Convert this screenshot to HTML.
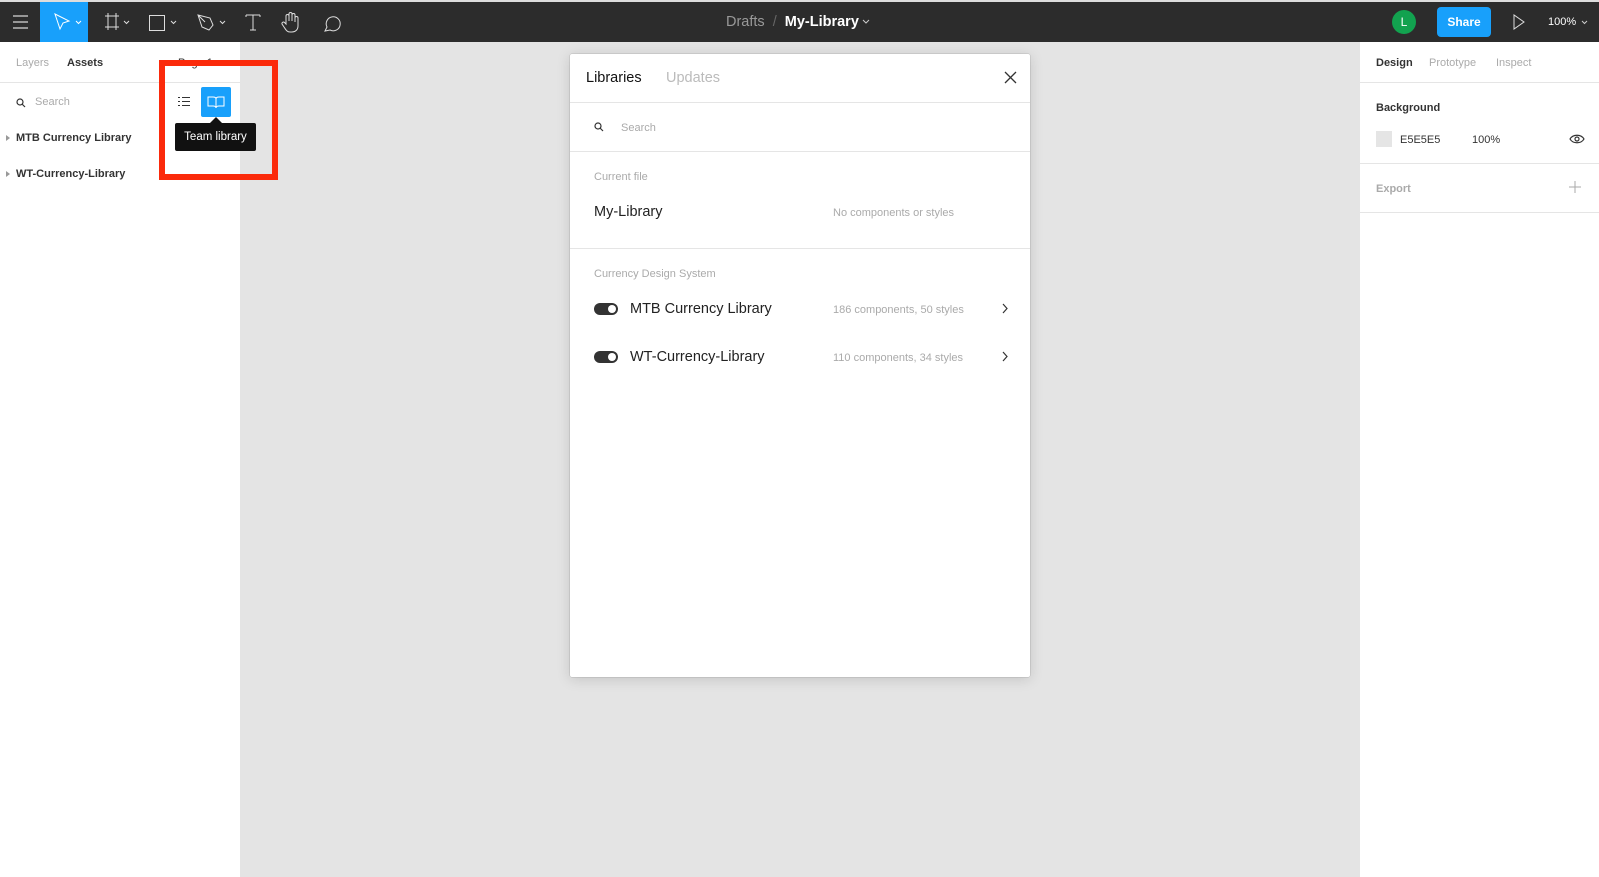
<!DOCTYPE html>
<html><head><meta charset="utf-8">
<style>
*{margin:0;padding:0;box-sizing:border-box}
body{width:1599px;height:877px;overflow:hidden;background:#e4e4e4;font-family:"Liberation Sans",sans-serif;position:relative}
.a{position:absolute}
.t{position:absolute;white-space:nowrap}
svg{position:absolute;overflow:visible}
</style></head><body>
<div class="a" style="left:0;top:0;width:1599px;height:2px;background:#ddd"></div>
<div class="a" style="left:0;top:2px;width:1599px;height:40px;background:#2c2c2c"></div>
<div class="a" style="left:40px;top:2px;width:48px;height:40px;background:#18a0fb"></div>
<svg width="1599" height="42" style="left:0;top:0" fill="none" stroke="#fff" stroke-width="1">
<path d="M13 16h15M13 22h15M13 28h15"/>
<path d="M55 14l14 7-6 2-3 6z" />
<path d="M76 21l2.5 2.5 2.5-2.5" stroke-width="1"/>
<path d="M105 16h14M105 27h14M108 13v17M116 13v17" stroke="#ddd"/>
<path d="M124 21l2.5 2.5 2.5-2.5" stroke="#ddd"/>
<rect x="149.5" y="15.5" width="15" height="15" stroke="#ddd"/>
<path d="M171 21l2.5 2.5 2.5-2.5" stroke="#ddd"/>
<path d="M198 15l12 3 3 7-4 5-7-3zM198 15l7 7" stroke="#ddd"/>
<path d="M220 21l2.5 2.5 2.5-2.5" stroke="#ddd"/>
<path d="M246 15h14M253 15v15M250 30h6M246 15v2M260 15v2" stroke="#ddd"/>
<path d="M286 24v-8a1.5 1.5 0 013 0v5v-7a1.5 1.5 0 013 0v7v-6a1.5 1.5 0 013 0v7v-4a1.5 1.5 0 013 0v8c0 4-3 6-6 6h-2c-3 0-4-2-6-5l-2-3a1.5 1.5 0 012.5-1.5z" stroke="#ddd"/>
<path d="M325 31l2-4a7 7 0 113 3z" stroke="#ddd"/>
<path d="M1582 21l2.5 2.5 2.5-2.5" stroke="#ccc"/>
<path d="M1514 15v14l10-7z" stroke="#ddd"/>
</svg>
<div class="t" style="left:726px;top:14px;font-size:14.5px;color:#999">Drafts <span style="margin:0 4px;color:#666">/</span> <span style="color:#fff;font-weight:bold">My-Library</span></div>
<svg style="left:863px;top:20px"><path d="M0 0l3 3 3-3" stroke="#ccc" fill="none"/></svg>
<div class="a" style="left:1392px;top:10px;width:24px;height:24px;border-radius:50%;background:#12a24f;color:#fff;font-size:12px;text-align:center;line-height:24px">L</div>
<div class="a" style="left:1437px;top:7px;width:54px;height:30px;border-radius:4px;background:#18a0fb;color:#fff;font-size:12px;font-weight:bold;text-align:center;line-height:30px">Share</div>
<div class="t" style="left:1548px;top:16px;font-size:11px;color:#fff">100%</div>

<!-- left panel -->
<div class="a" style="left:0;top:42px;width:240px;height:835px;background:#fff"></div>
<div class="a" style="left:0;top:82px;width:240px;height:1px;background:#e5e5e5"></div>
<div class="t" style="left:16px;top:57px;font-size:11px;color:#aaa">Layers</div>
<div class="t" style="left:67px;top:57px;font-size:11px;color:#333;font-weight:bold">Assets</div>
<div class="t" style="left:178px;top:57px;font-size:11px;color:#333">Page 1</div>
<svg style="left:16px;top:98px" fill="none" stroke="#333" stroke-width="1.2"><circle cx="4" cy="4" r="3"/><path d="M6 6l3 3"/></svg>
<div class="t" style="left:35px;top:96px;font-size:11px;color:#aaa">Search</div>
<svg style="left:178px;top:97px" fill="none" stroke="#333"><path d="M0 .5h2M4 .5h8M0 4.5h2M4 4.5h8M0 8.5h2M4 8.5h8"/></svg>
<div class="a" style="left:201px;top:87px;width:30px;height:30px;border-radius:2px;background:#18a0fb"></div>
<svg style="left:207px;top:96px" fill="none" stroke="#fff"><path d="M1 1h5c2 0 3 1 3 2v9c0-1-1-2-3-2H1zM17 1h-5c-2 0-3 1-3 2v9c0-1 1-2 3-2h5z"/></svg>
<div class="a" style="left:175px;top:123px;width:81px;height:28px;background:#111;border-radius:2px;color:#fff;font-size:11.5px;line-height:28px;text-align:center">Team library</div>
<svg style="left:210px;top:117px"><path d="M0 6l6-6 6 6z" fill="#111"/></svg>
<svg style="left:6px;top:135px"><path d="M0 0l4 3-4 3z" fill="#999"/></svg>
<div class="t" style="left:16px;top:132px;font-size:11px;color:#333;font-weight:bold">MTB Currency Library</div>
<svg style="left:6px;top:171px"><path d="M0 0l4 3-4 3z" fill="#999"/></svg>
<div class="t" style="left:16px;top:168px;font-size:11px;color:#333;font-weight:bold">WT-Currency-Library</div>
<div class="a" style="left:159px;top:60px;width:119px;height:120px;border:6px solid #fb2a0b"></div>

<!-- right panel -->
<div class="a" style="left:1360px;top:42px;width:239px;height:835px;background:#fff"></div>
<div class="a" style="left:1360px;top:82px;width:239px;height:1px;background:#e5e5e5"></div>
<div class="a" style="left:1360px;top:163px;width:239px;height:1px;background:#e5e5e5"></div>
<div class="a" style="left:1360px;top:212px;width:239px;height:1px;background:#e5e5e5"></div>
<div class="t" style="left:1376px;top:57px;font-size:11px;color:#333;font-weight:bold">Design</div>
<div class="t" style="left:1429px;top:57px;font-size:11px;color:#aaa">Prototype</div>
<div class="t" style="left:1496px;top:57px;font-size:11px;color:#aaa">Inspect</div>
<div class="t" style="left:1376px;top:102px;font-size:11px;color:#333;font-weight:bold">Background</div>
<div class="a" style="left:1376px;top:131px;width:16px;height:16px;background:#e5e5e5"></div>
<div class="t" style="left:1400px;top:134px;font-size:11px;color:#333">E5E5E5</div>
<div class="t" style="left:1472px;top:134px;font-size:11px;color:#333">100%</div>
<svg style="left:1570px;top:134px" fill="none" stroke="#333" stroke-width="1.2"><path d="M0 5c3-5 11-5 14 0c-3 5-11 5-14 0z"/><circle cx="7" cy="5" r="2"/></svg>
<div class="t" style="left:1376px;top:183px;font-size:11px;color:#aaa;font-weight:bold">Export</div>
<svg style="left:1569px;top:181px" stroke="#aaa"><path d="M6 0v12M0 6h12"/></svg>

<!-- modal -->
<div class="a" style="left:570px;top:54px;width:460px;height:623px;background:#fff;border-radius:2px;box-shadow:0 2px 14px rgba(0,0,0,.15),0 0 0 .5px rgba(0,0,0,.15)"></div>
<div class="t" style="left:586px;top:70px;font-size:14.5px;color:#111">Libraries</div>
<div class="t" style="left:666px;top:70px;font-size:14.5px;color:#bbb">Updates</div>
<svg style="left:1005px;top:72px" stroke="#333" stroke-width="1.3"><path d="M0 0l11 11M11 0L0 11"/></svg>
<div class="a" style="left:570px;top:102px;width:460px;height:1px;background:#e5e5e5"></div>
<svg style="left:594px;top:122px" fill="none" stroke="#333" stroke-width="1.2"><circle cx="4" cy="4" r="3"/><path d="M6 6l3 3"/></svg>
<div class="t" style="left:621px;top:122px;font-size:11px;color:#aaa">Search</div>
<div class="a" style="left:570px;top:151px;width:460px;height:1px;background:#e5e5e5"></div>
<div class="t" style="left:594px;top:171px;font-size:11px;color:#aaa">Current file</div>
<div class="t" style="left:594px;top:204px;font-size:14.5px;color:#222">My-Library</div>
<div class="t" style="left:833px;top:207px;font-size:11px;color:#aaa">No components or styles</div>
<div class="a" style="left:570px;top:248px;width:460px;height:1px;background:#e5e5e5"></div>
<div class="t" style="left:594px;top:268px;font-size:11px;color:#aaa">Currency Design System</div>
<div class="a" style="left:594px;top:303px;width:24px;height:12px;border-radius:6px;background:#333"></div>
<div class="a" style="left:608px;top:305px;width:8px;height:8px;border-radius:50%;background:#fff"></div>
<div class="t" style="left:630px;top:301px;font-size:14.5px;color:#222">MTB Currency Library</div>
<div class="t" style="left:833px;top:304px;font-size:11px;color:#aaa">186 components, 50 styles</div>
<svg style="left:1003px;top:304px" fill="none" stroke="#333" stroke-width="1.2"><path d="M0 0l4 4.5L0 9"/></svg>
<div class="a" style="left:594px;top:351px;width:24px;height:12px;border-radius:6px;background:#333"></div>
<div class="a" style="left:608px;top:353px;width:8px;height:8px;border-radius:50%;background:#fff"></div>
<div class="t" style="left:630px;top:349px;font-size:14.5px;color:#222">WT-Currency-Library</div>
<div class="t" style="left:833px;top:352px;font-size:11px;color:#aaa">110 components, 34 styles</div>
<svg style="left:1003px;top:352px" fill="none" stroke="#333" stroke-width="1.2"><path d="M0 0l4 4.5L0 9"/></svg>
</body></html>
